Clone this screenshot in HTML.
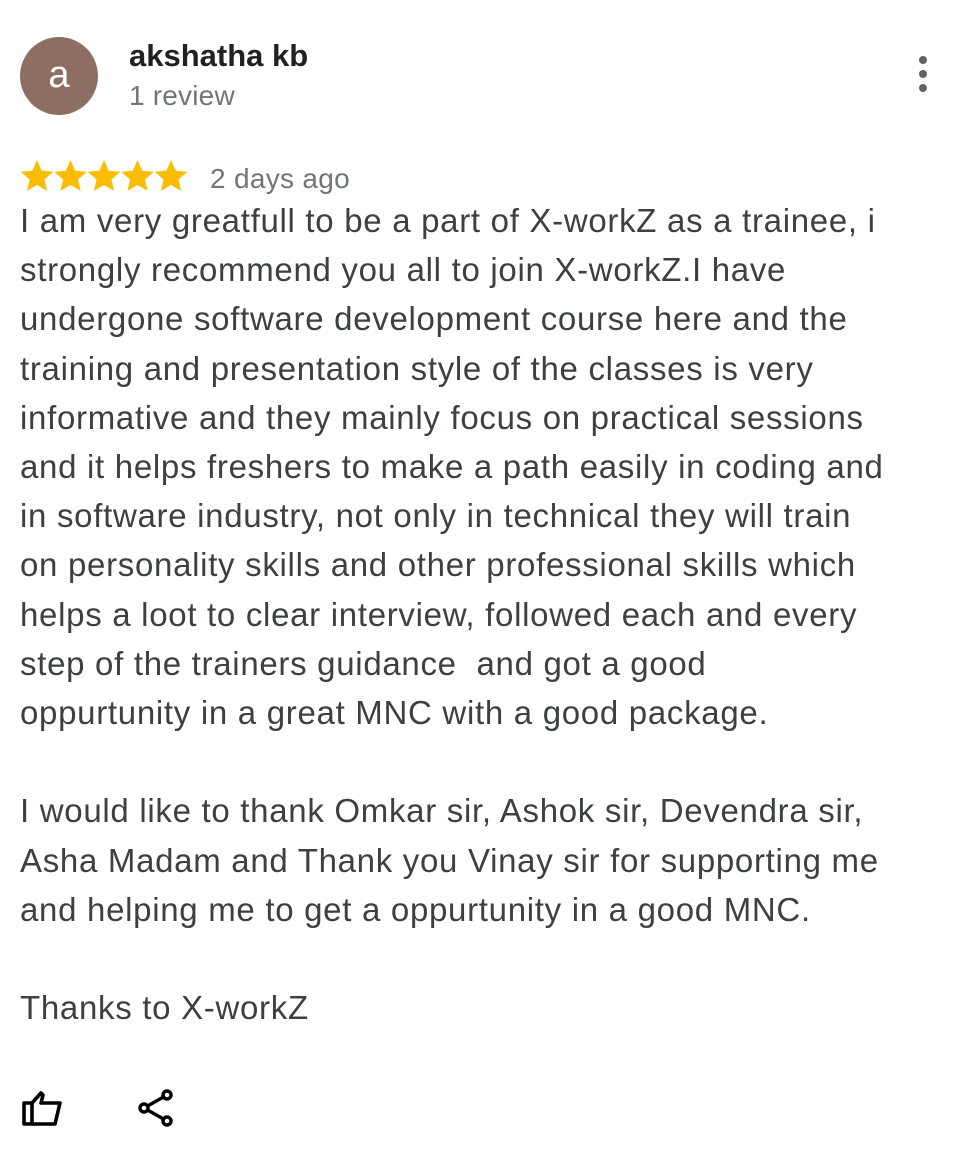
<!DOCTYPE html>
<html><head><meta charset="utf-8"><style>
body{margin:0;width:968px;height:1150px;background:#fff;font-family:"Liberation Sans",Arial,sans-serif;position:relative;overflow:hidden}
.av{position:absolute;left:20px;top:37px;width:78px;height:78px;border-radius:50%;background:#8d6e63;color:#fff;font-size:38px;text-align:center;line-height:76px}
.name{position:absolute;left:129px;top:38px;font-size:31px;font-weight:bold;color:#202124}
.rev{position:absolute;left:129px;top:80px;font-size:28px;color:#70757a;letter-spacing:0.2px}
.stars{position:absolute;left:20px;top:159px}
.date{position:absolute;left:210px;top:163px;font-size:28px;color:#70757a;letter-spacing:0.3px}
.body{position:absolute;left:20px;top:196px;width:940px;font-size:33px;letter-spacing:0.7px;line-height:49.2px;color:#3c4043;white-space:pre-wrap}
.dot{position:absolute;left:919px;width:8px;height:8px;border-radius:50%;background:#5f6368}
</style></head><body>
<div class="av">a</div>
<div class="name">akshatha kb</div>
<div class="rev">1 review</div>
<div class="dot" style="top:56px"></div><div class="dot" style="top:70px"></div><div class="dot" style="top:84px"></div>
<svg class="stars" width="170" height="34" viewBox="0 0 170 34" fill="#fbbc04">
<defs><path id="s" d="M17 1l4.7 10.8 11.6 1-8.8 7.7 2.6 11.4L17 26l-10.1 5.9 2.6-11.4L0.7 12.8l11.6-1z"/></defs>
<use href="#s"/><use href="#s" x="33.5"/><use href="#s" x="67"/><use href="#s" x="100.5"/><use href="#s" x="134"/>
</svg>
<div class="date">2 days ago</div>
<div class="body">I am very greatfull to be a part of X-workZ as a trainee, i
strongly recommend you all to join X-workZ.I have
undergone software development course here and the
training and presentation style of the classes is very
informative and they mainly focus on practical sessions
and it helps freshers to make a path easily in coding and
in software industry, not only in technical they will train
on personality skills and other professional skills which
helps a loot to clear interview, followed each and every
step of the trainers guidance  and got a good
oppurtunity in a great MNC with a good package.

I would like to thank Omkar sir, Ashok sir, Devendra sir,
Asha Madam and Thank you Vinay sir for supporting me
and helping me to get a oppurtunity in a good MNC.

Thanks to X-workZ</div>
<svg style="position:absolute;left:20px;top:1090px" width="44" height="40" viewBox="0 0 44 40" fill="none" stroke="#000" stroke-width="3.6" stroke-linejoin="round">
<path d="M4 13h8v21H4z"/><path d="M12 13l9-10 2 2-2 8h19l-5 21H12"/>
</svg>
<svg style="position:absolute;left:135px;top:1088px" width="40" height="44" viewBox="0 0 40 44" fill="none" stroke="#000" stroke-width="3.4">
<circle cx="32" cy="7" r="4"/><circle cx="9" cy="20" r="4"/><circle cx="32" cy="33" r="4"/>
<path d="M12.5 18l16-9M12.5 22l16 9"/>
</svg>
</body></html>
